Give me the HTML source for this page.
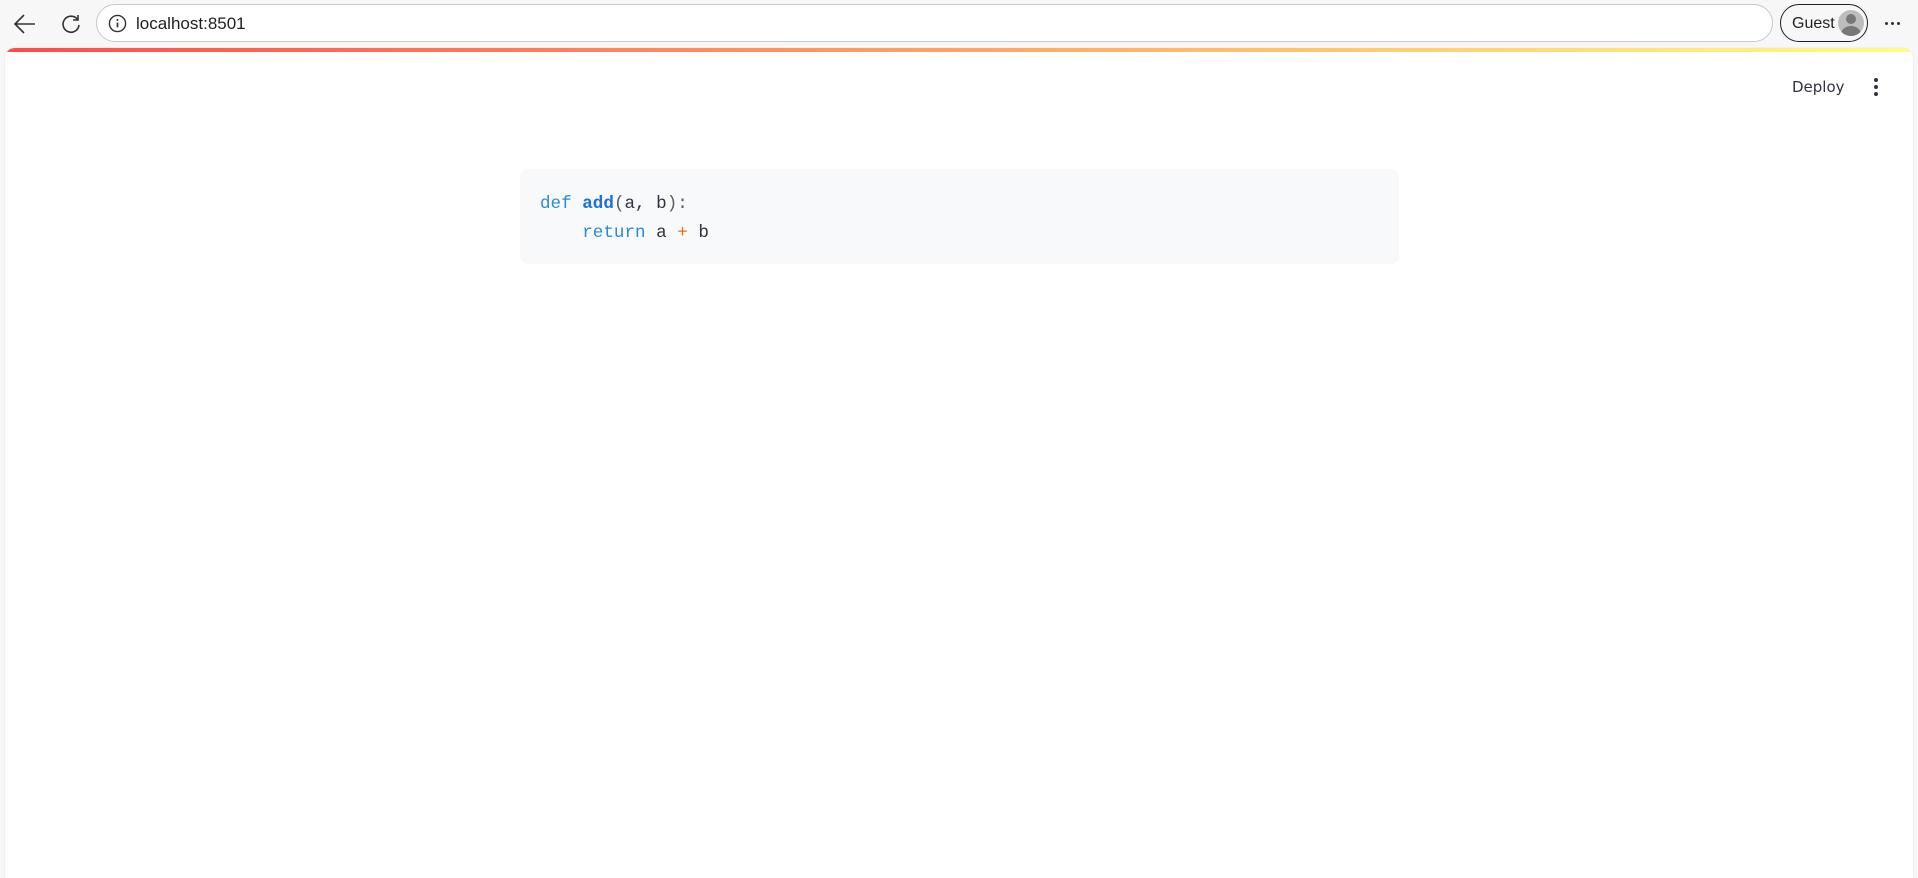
<!DOCTYPE html>
<html><head><style>
html,body{margin:0;padding:0;width:1918px;height:862px;overflow:hidden;background:#f7f7f7;font-family:"Liberation Sans",sans-serif;}
.addr{position:absolute;left:96px;top:4px;width:1677px;height:38px;border:1px solid #c8c8c8;border-radius:20px;background:#fff;box-sizing:border-box;}
.addr span{position:absolute;left:39px;top:9px;font-size:17px;color:#1f1f1f;}
.guest{position:absolute;left:1780px;top:4px;width:88px;height:38px;border:1.5px solid #1f1f1f;border-radius:20px;box-sizing:border-box;}
.guest span{position:absolute;left:11px;top:10px;font-size:16px;color:#1f1f1f;}
.av{position:absolute;left:57px;top:5px;width:26px;height:26px;border-radius:50%;background:#bdbdbd;overflow:hidden;}
.panel{position:absolute;left:5px;top:48px;width:1908px;height:830px;background:#fff;border-radius:10px 10px 0 0;overflow:hidden;box-shadow:0 0 1px #ccc;}
.grad{height:4px;background:linear-gradient(90deg,#ff4b4b,#fffd80);}
.deploy{position:absolute;left:1787px;top:30px;color:#31333f;font-family:"DejaVu Sans",sans-serif;font-size:15px;}
.code{position:absolute;left:515px;top:121px;width:879px;height:95px;background:#f8f9fb;border-radius:8px;font-family:"Liberation Mono",monospace;font-size:17.6px;line-height:29px;color:#31333f;}
.code pre{margin:0;position:absolute;left:20px;top:21px;font:inherit;}
.k{color:#2b88e0;}.f{color:#1a73d9;font-weight:bold;}.o{color:#e8710a;}.p{color:#5a5d68}
</style></head><body>
<svg style="position:absolute;left:13px;top:13px" width="24" height="22" viewBox="0 0 24 22"><path d="M22 11H2M11 2L2 11l9 9" stroke="#333" stroke-width="1.6" fill="none"/></svg>
<svg style="position:absolute;left:60px;top:13px" width="22" height="22" viewBox="0 0 22 22"><path d="M17.5 6.5A8 8 0 1 0 19 12" stroke="#333" stroke-width="1.6" fill="none"/><path d="M18 2v5h-5" stroke="#333" stroke-width="1.6" fill="none"/></svg>
<div class="addr"><svg style="position:absolute;left:11px;top:9px" width="19" height="19" viewBox="0 0 20 20"><circle cx="10" cy="10" r="8.5" stroke="#333" stroke-width="1.5" fill="none"/><path d="M10 9v5" stroke="#333" stroke-width="1.8"/><circle cx="10" cy="6.3" r="1.1" fill="#333"/></svg><span>localhost:8501</span></div>
<div class="guest"><span>Guest</span><div class="av"><div style="position:absolute;left:8px;top:4px;width:10px;height:10px;border-radius:50%;background:#777"></div><div style="position:absolute;left:3px;top:16px;width:20px;height:16px;border-radius:50%;background:#777"></div></div></div>
<div style="position:absolute;left:1885px;top:22px;display:flex;gap:3px"><i style="width:3px;height:3px;background:#333;border-radius:50%"></i><i style="width:3px;height:3px;background:#333;border-radius:50%"></i><i style="width:3px;height:3px;background:#333;border-radius:50%"></i></div>
<div class="panel"><div class="grad"></div>
<div class="deploy">Deploy</div>
<div style="position:absolute;left:1869px;top:30px;width:4px;"><i style="display:block;width:4px;height:4px;background:#31333f;border-radius:50%;margin-bottom:3px"></i><i style="display:block;width:4px;height:4px;background:#31333f;border-radius:50%;margin-bottom:3px"></i><i style="display:block;width:4px;height:4px;background:#31333f;border-radius:50%"></i></div>
<div class="code"><pre><span class="k">def</span> <span class="f">add</span><span class="p">(</span>a, b<span class="p">):</span>
    <span class="k">return</span> a <span class="o">+</span> b</pre></div>
</div>
</body></html>
